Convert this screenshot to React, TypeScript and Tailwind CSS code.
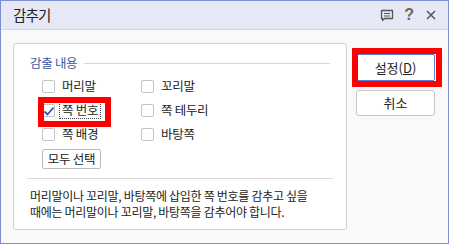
import React from "react";

const font = { fontFamily: '"Noto Sans CJK KR", "Noto Sans", sans-serif' };

function Check({ label, checked }: { label: string; checked?: boolean }) {
  return (
    <div className="flex items-center h-[24px] w-[99px]">
      <div className="relative w-[13px] h-[13px] border border-[#c4c4c4] rounded-[2px] bg-white shrink-0">
        {checked && (
          <svg className="absolute left-[0px] top-[0px]" width="12" height="12" viewBox="0 0 12 12">
            <path d="M1.5 6.5 L4.5 9.5 L10.5 2.5" fill="none" stroke="#3552b0" strokeWidth="1.8" />
          </svg>
        )}
        {checked && (
          <div className="absolute left-[-5px] top-[-8px] w-[73px] h-[30px] border-[6px] border-[#ff0000]" />
        )}
      </div>
      <span
        className={
          "ml-[4px] px-[2px] h-[18px] flex items-center text-[12.5px] tracking-[-0.3px] text-[#222] border " +
          (checked ? "border-dotted border-[#444]" : "border-transparent")
        }
      >
        {label}
      </span>
    </div>
  );
}

export default function App() {
  return (
    <div style={font} className="w-[449px] h-[244px] border border-[#7b8fd2] flex flex-col bg-[#f9f9f9]">
      <div className="h-[29px] bg-[#e6e9f5] border-b border-[#d4d7e8] flex items-center pl-[12px] pr-[12px] shrink-0">
        <span className="text-[14.5px] tracking-[-0.8px] text-[#222]">감추기</span>
        <div className="ml-auto flex items-center">
          <svg width="14" height="13" viewBox="0 0 14 13" className="mr-[10px]">
            <path d="M1.5 1.5 H12.5 V9.5 H4.5 L2.5 11.5 V9.5 H1.5 Z" fill="none" stroke="#555" strokeWidth="1.3" strokeLinejoin="round" />
            <path d="M4 4.5 H10 M4 7 H10" stroke="#555" strokeWidth="1.2" />
          </svg>
          <span className="text-[16px] font-bold text-[#666] leading-none mr-[12px]" style={{ fontFamily: '"Liberation Sans", sans-serif' }}>?</span>
          <svg width="10" height="10" viewBox="0 0 10 10">
            <path d="M1 1 L9 9 M9 1 L1 9" stroke="#555" strokeWidth="1.5" />
          </svg>
        </div>
      </div>
      <div className="flex-1 flex pl-[12px] pt-[13px]">
        <div className="w-[334px] h-[187px] border border-[#cfcfcf] rounded-[3px] bg-white px-[16px] pt-[12px] flex flex-col">
          <div className="h-[14px] flex items-center">
            <span className="text-[12.5px] tracking-[-0.3px] text-[#3d5a9c]">감출 내용</span>
            <div className="flex-1 h-px bg-[#d8d8d8] ml-[7px]" />
          </div>
          <div className="mt-[4px] pl-[12px] flex flex-col">
            <div className="flex">
              <Check label="머리말" />
              <Check label="꼬리말" />
            </div>
            <div className="flex">
              <Check label="쪽 번호" checked />
              <Check label="쪽 테두리" />
            </div>
            <div className="flex">
              <Check label="쪽 배경" />
              <Check label="바탕쪽" />
            </div>
            <button className="mt-[3px] w-[59px] h-[20px] border border-[#bdbdbd] rounded-[2px] bg-white text-[12.5px] tracking-[-0.3px] text-[#222] flex items-center justify-center">
              모두 선택
            </button>
          </div>
          <div className="mt-[9px] mx-[-3px] h-px bg-[#d8d8d8]" />
          <div className="mt-[9px] text-[12px] tracking-[-0.3px] text-[#222] flex flex-col">
            <div className="leading-[16px]">머리말이나 꼬리말, 바탕쪽에 삽입한 쪽 번호를 감추고 싶을</div>
            <div className="leading-[16px]">때에는 머리말이나 꼬리말, 바탕쪽을 감추어야 합니다.</div>
          </div>
        </div>
        <div className="ml-[9px] pt-[11px] flex flex-col">
          <div className="relative">
            <button className="w-[79px] h-[27px] border border-[#5b7bd5] rounded-[2px] bg-white text-[13px] text-[#222] flex items-center justify-center">
              설정(<span className="underline">D</span>)
            </button>
            <div className="absolute left-[-4px] top-[-6px] w-[90px] h-[39px] border-[6px] border-[#ff0000]" />
          </div>
          <button className="mt-[9px] w-[79px] h-[26px] border border-[#c6c6c6] rounded-[3px] bg-white text-[13px] text-[#222] flex items-center justify-center">
            취소
          </button>
        </div>
      </div>
    </div>
  );
}
